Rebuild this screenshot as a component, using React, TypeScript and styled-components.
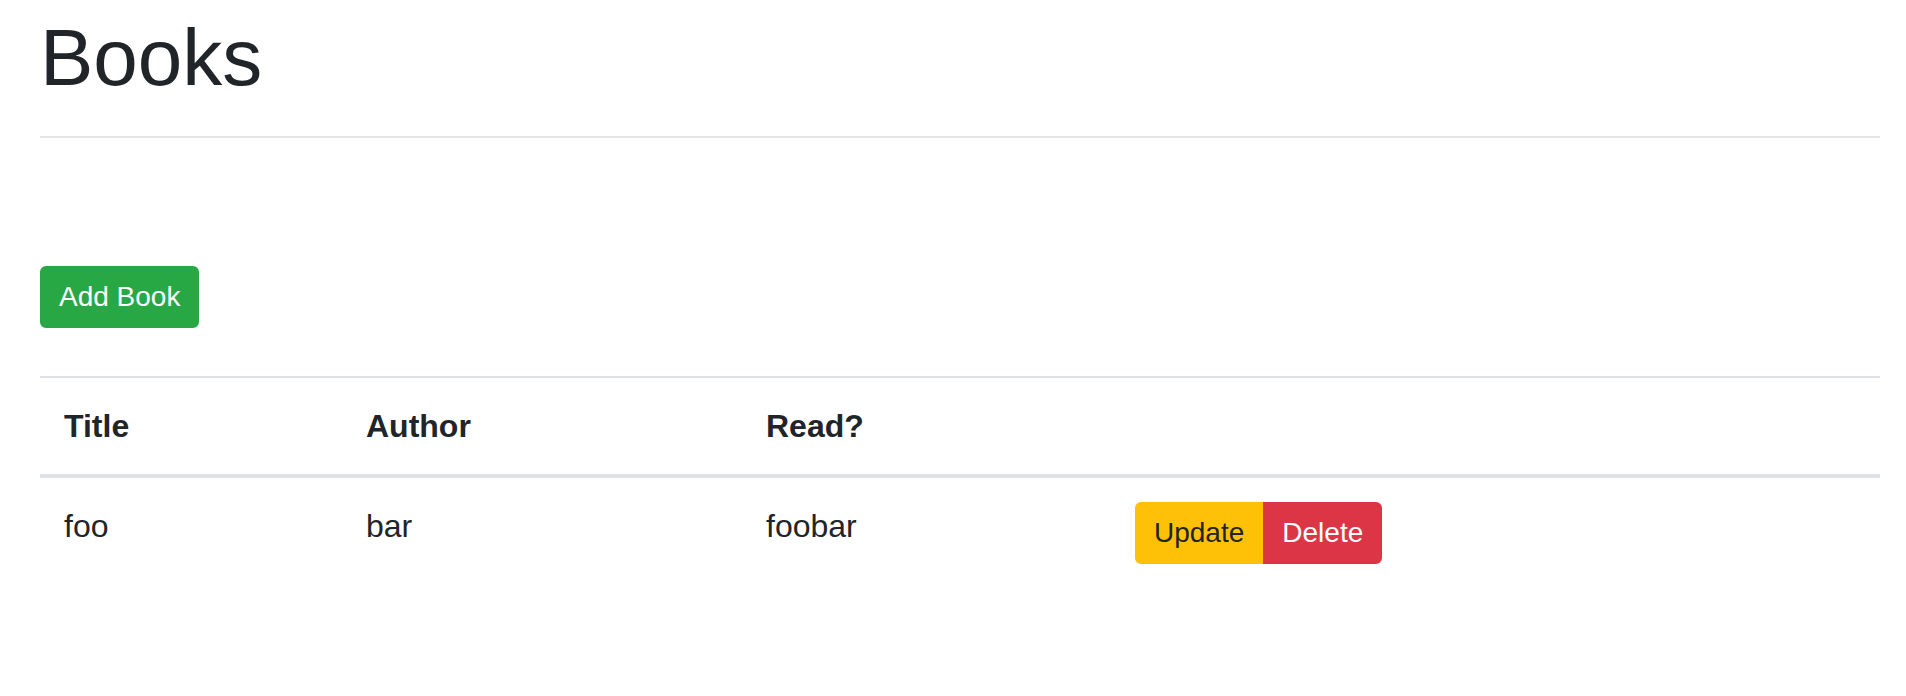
import React from "react";
import styled, { createGlobalStyle } from "styled-components";

const GlobalStyle = createGlobalStyle`
  html, body {
    margin: 0;
    padding: 0;
    background: #ffffff;
  }
  body {
    font-family: "Liberation Sans", Arial, Helvetica, sans-serif;
    font-size: 32px;
    line-height: 48px;
    color: #212529;
  }
  * { box-sizing: border-box; }
`;

const Page = styled.div`
  padding: 10px 26px 0 40px;
`;

const Heading = styled.h1`
  margin: 0;
  font-size: 80px;
  line-height: 96px;
  font-weight: 500;
  color: #212529;
`;

const Rule = styled.hr`
  margin: 30px 0 0;
  border: 0;
  border-top: 2px solid rgba(0, 0, 0, 0.1);
  height: 0;
`;

const Toolbar = styled.div`
  margin-top: 128px;
  display: flex;
`;

type Variant = "success" | "warning" | "danger";

const palette: Record<Variant, { bg: string; fg: string }> = {
  success: { bg: "#28a745", fg: "#ffffff" },
  warning: { bg: "#ffc107", fg: "#212529" },
  danger: { bg: "#dc3545", fg: "#ffffff" },
};

const Button = styled.button<{ $variant: Variant; $pos?: "first" | "last" | "solo" }>`
  font-family: "Liberation Sans", Arial, Helvetica, sans-serif;
  font-size: 28px;
  line-height: 42px;
  font-weight: 400;
  padding: 8px 17px;
  border: 2px solid ${(p) => palette[p.$variant].bg};
  background: ${(p) => palette[p.$variant].bg};
  color: ${(p) => palette[p.$variant].fg};
  border-radius: ${(p) =>
    p.$pos === "first" ? "6px 0 0 6px" : p.$pos === "last" ? "0 6px 6px 0" : "6px"};
  cursor: pointer;
  white-space: nowrap;
`;

const Group = styled.div`
  display: inline-flex;
`;

const Table = styled.table`
  margin-top: 48px;
  width: 100%;
  border-collapse: collapse;
  color: #212529;
`;

const HeadCell = styled.th<{ $w?: number }>`
  text-align: left;
  font-weight: 700;
  padding: 24px;
  line-height: 48px;
  vertical-align: bottom;
  border-top: 2px solid #dee2e6;
  border-bottom: 4px solid #dee2e6;
  width: ${(p) => (p.$w ? `${p.$w}px` : "auto")};
`;

const Cell = styled.td`
  padding: 24px;
  line-height: 48px;
  vertical-align: top;
`;

const books = [{ title: "foo", author: "bar", read: "foobar" }];

export default function App() {
  return (
    <>
      <GlobalStyle />
      <Page>
        <Heading>Books</Heading>
        <Rule />
        <Toolbar>
          <Button $variant="success" $pos="solo">Add Book</Button>
        </Toolbar>
        <Table>
          <thead>
            <tr>
              <HeadCell $w={302}>Title</HeadCell>
              <HeadCell $w={400}>Author</HeadCell>
              <HeadCell $w={369}>Read?</HeadCell>
              <HeadCell />
            </tr>
          </thead>
          <tbody>
            {books.map((b) => (
              <tr key={b.title}>
                <Cell>{b.title}</Cell>
                <Cell>{b.author}</Cell>
                <Cell>{b.read}</Cell>
                <Cell>
                  <Group>
                    <Button $variant="warning" $pos="first">Update</Button>
                    <Button $variant="danger" $pos="last">Delete</Button>
                  </Group>
                </Cell>
              </tr>
            ))}
          </tbody>
        </Table>
      </Page>
    </>
  );
}
